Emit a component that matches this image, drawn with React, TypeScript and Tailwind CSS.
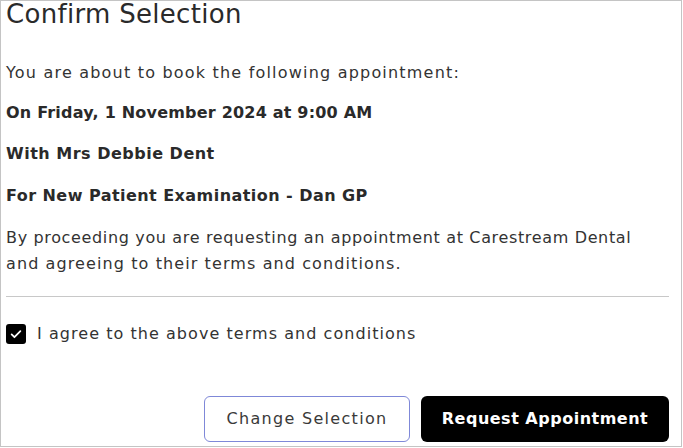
import React, { useState } from 'react';

function App() {
  const [agreed, setAgreed] = useState(true);

  return (
    <div className="w-[683px] h-[448px] bg-white overflow-hidden">
      <div
        className="h-[447px] w-[682px] border border-[#c4c4c4] px-[5px] text-[#333333] overflow-hidden"
        style={{ fontFamily: '"DejaVu Sans", "Noto Sans", sans-serif' }}
      >
        <h1 className="text-[26px] leading-[28px] tracking-[0.3px] text-[#2a2a2a] -mt-[1px]">Confirm Selection</h1>

        <p className="mt-[32px] text-[16px] leading-[26px] tracking-[1.2px]">You are about to book the following appointment:</p>
        <p className="mt-[14px] text-[16px] leading-[26px] tracking-[0.2px] font-bold text-[#2a2a2a]">On Friday, 1 November 2024 at 9:00 AM</p>
        <p className="mt-[15px] text-[16px] leading-[26px] tracking-[0.5px] font-bold text-[#2a2a2a]">With Mrs Debbie Dent</p>
        <p className="mt-[16px] text-[16px] leading-[26px] tracking-[0.45px] font-bold text-[#2a2a2a]">For New Patient Examination - Dan GP</p>
        <p className="mt-[16px] text-[16px] leading-[26px]">
          <span className="tracking-[0.65px]">By proceeding you are requesting an appointment at Carestream Dental</span>
          <br />
          <span className="tracking-[1.1px]">and agreeing to their terms and conditions.</span>
        </p>

        <div className="mt-[19px] mr-[7px] border-t border-[#c8c8c8]" />

        <label className="mt-[27px] flex items-center gap-[11px] cursor-pointer">
          <button
            type="button"
            onClick={() => setAgreed(!agreed)}
            className={`w-[20px] h-[20px] rounded-[3px] flex items-center justify-center ${agreed ? 'bg-black' : 'bg-white border border-black'}`}
          >
            {agreed && (
              <svg viewBox="0 0 16 16" className="w-[14px] h-[14px]" fill="none" stroke="white" strokeWidth="2" strokeLinecap="round" strokeLinejoin="round">
                <path d="M3 8.5l3.2 3.2L13 4.8" />
              </svg>
            )}
          </button>
          <span className="text-[16px] leading-[20px] tracking-[1.05px]">I agree to the above terms and conditions</span>
        </label>

        <div className="mt-[52px] mr-[7px] flex justify-end gap-[11px]">
          <button className="h-[46px] w-[206px] rounded-[6px] border border-[#7f88d8] bg-white text-[16px] tracking-[1.3px] text-[#3a3a3a]">
            Change Selection
          </button>
          <button className="h-[46px] w-[248px] rounded-[6px] bg-black text-[16px] tracking-[0.5px] font-bold text-white">
            Request Appointment
          </button>
        </div>
      </div>
    </div>
  );
}

export default App;
